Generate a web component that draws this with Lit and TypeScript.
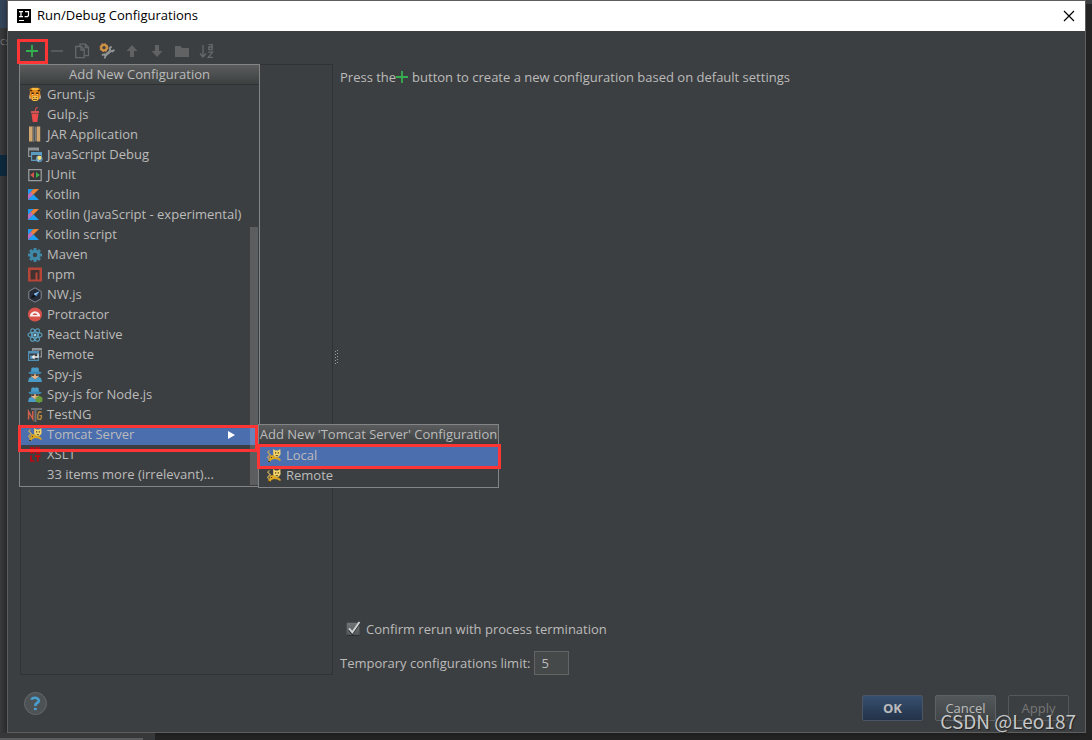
import { LitElement, html, svg, css, nothing, TemplateResult } from "lit";
import { customElement, property, state } from "lit/decorators.js";

const star = (n: number, r: number, w: number) =>
  Array.from({ length: n }, (_, i) => svg`<rect x=${8 - w / 2} y=${8 - r} width=${w} height="4" transform="rotate(${(i * 360) / n} 8 8)"/>`);

const tomcat = svg`
  <path d="M3.400 12 1.600 9.400 3.800 7M3.500 2.400 1.800 4.200 4.600 7" fill="none" stroke="#c2a35c" stroke-width="1.200"/>
  <path d="M4 7.600 7.500 7 9 8.600 13 9.800 15 12 14 13 11.500 11.500 8 11 5.500 12 4 14H1.600L3.200 11.500Z" fill="#d9a520"/>
  <path d="M7.200 1 9.400 2.400H12L14.300 1 14.600 6.200 12.800 8.800H9L7.200 6.400Z" fill="#f4d36a"/>
  <path d="M9 4.200h1.200v1.300H9zM11.700 4.200h1.200v1.300h-1.200zM9.700 7h2.400v.8H9.700zM5 9h1v1H5zM2 13h2v1H2z" fill="#4b3a12"/>`;

const kotlin = svg`
  <path d="M1 2H6.6L1 8Z" fill="#1c9af2"/>
  <path d="M6.6 2H12L1 13V8Z" fill="#e8813a"/>
  <path d="M1 8 4 4.8 6 8 1 13Z" fill="#b96cc0"/>
  <path d="M1 13 6.5 7.5 12 13Z" fill="#1ea0f5"/>`;

const spy = svg`
  <path d="M4.4 1 6.5.2 8 1 9.5.2 11.6 1 12 5H4Z" fill="#4a9cc6"/>
  <path d="M1 5.4 4 4.4h8l3 1-2 1.6H3Z" fill="#3c88b4"/>
  <path d="M4 7h8l-.6 3L8 12.4 4.6 10Z" fill="#e6b184"/>
  <path d="M4 7.2h3.400L7 8.8H4.6ZM8.600 7.200H12l-.6 1.600H9Z" fill="#23292d"/>
  <path d="M1 15 2 11 4.6 9.8 8 12.6 11.4 9.8 14 11l1 4Z" fill="#4a9cc6"/>`;

const icons: Record<string, TemplateResult> = {
  grunt: svg`
    <path d="M2.5 2 5 .8h6L13.500 2 13 5 13.600 9 11 13.500H5L2.400 9 3 5Z" fill="#e48a1e"/>
    <path d="M5 1h6v2H5z" fill="#f6b93c"/>
    <path d="M3 2.500 5.600 3.600 5 4.400 3 4ZM13 2.500 10.400 3.600 11 4.400 13 4ZM4.500 5.500h2.300v1.700H4.500zM9.200 5.500h2.300v1.700H9.200z" fill="#3c2408"/>
    <path d="M5 7.300h1.400v.8H5zM9.600 7.300H11v.8H9.600zM2.200 8l1.600 3.600L2.600 12ZM13.800 8l-1.600 3.600 1.200.4Z" fill="#f5ecd7"/>
    <path d="M5.500 9h5l.5 3.500-1.500 1.500h-3L5 12.500Z" fill="#f6c24a"/>
    <path d="M6.200 10h1v1h-1zM8.800 10h1v1h-1zM6 12.200h4v.8H6z" fill="#5a3508"/>`,
  gulp: svg`
    <path d="M8 4.500 9 1.200 10.800.4" fill="none" stroke="#d8484a" stroke-width="1.100"/>
    <path d="M4 4.200h8v1.600H4z" fill="#f05a5b"/><path d="M4.500 6.400h7L10.300 15H5.700Z" fill="#eb4a4b"/>`,
  jar: svg`
    <path d="M2-.6h3.600v15H2zM9.600-.6h3.600v15H9.600z" fill="#cfa670"/>
    <path d="M6.800-.6v15M8.600.4v14" stroke="#b8babb" stroke-width="1.200" stroke-dasharray="1 1"/>`,
  jsdebug: svg`
    <path d="M1 .5h11v3H1z" fill="#8f9193"/><path d="M1.600 3v6.400H4M11.400 3v1" fill="none" stroke="#8f9193" stroke-width="1.200"/>
    <path d="M4.600 5.600h9.800v7.800H4.600z" fill="#3c3f41" stroke="#5b9bc2" stroke-width="1.200"/><path d="M4 5h11v3H4z" fill="#5b9bc2"/>
    <circle cx="12.200" cy="11.800" r="3.400" fill="#5c8fb3"/><circle cx="12.400" cy="10.800" r="2.100" fill="#f7e07a"/><path d="M9.500 12.500 12 13v2Z" fill="#a9c9dd"/>`,
  junit: svg`
    <path d="M1.800 2.600h12.400v11H1.800z" fill="#35383a" stroke="#9a9c9d" stroke-width="1.300"/>
    <path d="M7 5v6L3.200 8Z" fill="#d4564b"/><path d="M9 5v6l3.800-3Z" fill="#3fae49"/>`,
  kotlin,
  maven: svg`<g fill="#3f89a8">${star(8, 7, 3)}<circle cx="8" cy="8" r="5.200"/></g><circle cx="8" cy="8" r="2.200" fill="#3c3f41"/>`,
  npm: svg`<path d="M1 .5h14v14H1z" fill="#b64638"/><path d="M3.500 3h9v9.500H10.500V5.500H8.500v7H3.500z" fill="#42322f"/>`,
  nw: svg`
    <path d="M8 .8 14.200 4.400v7.200L8 15.200 1.800 11.600V4.400Z" fill="#252c38" stroke="#858a90"/>
    <path d="M12.600 4.200 9.200 9.400 6.800 7Z" fill="#4a90d9"/><path d="M3.400 11.800 6.800 7l2.400 2.400Z" fill="#0f1319"/><path d="M12.600 4.200 6.800 7l1.200 1.200Z" fill="#9cc7ee"/>`,
  protractor: svg`<circle cx="8" cy="7.500" r="7" fill="#d9534a"/>
    <path d="M2.800 9.500a5.200 5.200 0 0 1 10.400 0Z" fill="#f7f0ef"/><path d="M5.600 8a2.500 2.300 0 0 1 4.800 0Z" fill="#d9534a"/>`,
  react: svg`<g fill="none" stroke="#5ba3c4" stroke-width="1.100">
    <ellipse cx="8" cy="8" rx="7" ry="2.700"/><ellipse cx="8" cy="8" rx="7" ry="2.700" transform="rotate(60 8 8)"/><ellipse cx="8" cy="8" rx="7" ry="2.700" transform="rotate(120 8 8)"/></g>
    <circle cx="8" cy="8" r="1.500" fill="#8fd0ea"/>`,
  remote: svg`
    <path d="M5 1h10v2.500H5zM13.800 3v6.200H12.500v1.200H15V3z" fill="#8f9193"/><path d="M5 1h1.200v3H5z" fill="#8f9193"/>
    <path d="M1.600 4.600h9.800v8.800H1.600z" fill="#3c3f41" stroke="#4f8fb8" stroke-width="1.200"/><path d="M1 4h11v2.500H1z" fill="#4f8fb8"/><path d="M3 8.500h3v3.500H3z" fill="#4f8fb8"/>
    <path d="M11 6.500V10H6.500" fill="none" stroke="#eceded" stroke-width="1.300"/><path d="M7.600 7.400v5.200L4.400 10Z" fill="#eceded"/>`,
  spy,
  spynode: svg`${spy}<path d="M12 8.800l3.400 1.800v3.600L12 16l-3.400-1.800v-3.600Z" fill="#6a9a3a"/>`,
  testng: svg`<path d="M4 1h11v2H9.500v12H7.500V3H4z" fill="#6f7173"/>
    <path d="M1.600 12.500V4.500L5.800 12V4" fill="none" stroke="#d1624e" stroke-width="1.500"/>
    <path d="M14.600 5.200 12 4.800 10.800 8v4l2.600.4 1-1.600V8.600h-2" fill="none" stroke="#b5853d" stroke-width="1.400"/>`,
  tomcat,
  xslt: svg`<g fill="none" stroke="#c4070d" stroke-width="1.700"><path d="M3.500 0 7 6.500M7 0 3.500 6.500M13 1H9.200v2.500H12.500V6H8.800M4 8.500V14H7.500M8 9.200h5.500M10.800 9v5.500"/></g>`,
  add: svg`<path d="M2 8h12M8 2v12" stroke="#35b04e" stroke-width="1.800"/>`,
  remove: svg`<path d="M2 8h12" stroke="#636566" stroke-width="1.400"/>`,
  copy: svg`<g fill="#3c3f41" stroke="#66686a" stroke-width="1.300"><path d="M6 3.500V1.200h5.500l3 3v8.500H11"/><path d="M1.700 3.500h5.500l3 3v8.200H1.700z"/><path d="M7 4v3h3M11.200 1.500v3h3" fill="none"/></g>`,
  tools: svg`
    <g fill="none" stroke="#8f9394"><path d="M11.500 8 5.500 13" stroke-width="2.800"/>
    <path d="M12.600 3.600 10.800 5.200 11.200 7.600 13.400 8.400 15.400 6.800" stroke-width="2"/>
    <path d="M2.800 12.200 5.200 11.400 6.400 13 5.600 15.600" stroke-width="1.800"/></g>
    <g fill="none" stroke="#cf9146"><circle cx="5" cy="4.600" r="2.800" stroke-width="2.200"/><circle cx="5" cy="4.600" r="3.900" stroke-width="1.200" stroke-dasharray="1.700 1.360"/></g>`,
  up: svg`<path d="M8 2l5.500 6H10v6H6V8H2.500Z" fill="#606264"/>`,
  down: svg`<path d="M8 14l5.500-6H10V2H6v6H2.500Z" fill="#606264"/>`,
  folder: svg`<path d="M1 3h5.500L8 5h7v9H1z" fill="#606264"/>`,
  sort: svg`<g fill="none" stroke="#66686a" stroke-width="1.300"><path d="M4 2v11.500M1 10.500l3 3.500 3-3.500"/>
    <path d="M9.600 1.700h3.600v4.900H9.800V4H13M9.300 9.100h4.200l-4.200 5.200h4.500"/></g>`,
};

const icon = (name: string, narrow = false) =>
  html`<svg class="icon ${narrow ? "narrow" : ""}" viewBox=${narrow ? "0 0 14 16" : "0 0 16 16"} aria-hidden="true">${icons[name]}</svg>`;

const configurations: Array<[string, string]> = [
  ["grunt", "Grunt.js"],
  ["gulp", "Gulp.js"],
  ["jar", "JAR Application"],
  ["jsdebug", "JavaScript Debug"],
  ["junit", "JUnit"],
  ["kotlin", "Kotlin"],
  ["kotlin", "Kotlin (JavaScript - experimental)"],
  ["kotlin", "Kotlin script"],
  ["maven", "Maven"],
  ["npm", "npm"],
  ["nw", "NW.js"],
  ["protractor", "Protractor"],
  ["react", "React Native"],
  ["remote", "Remote"],
  ["spy", "Spy-js"],
  ["spynode", "Spy-js for Node.js"],
  ["testng", "TestNG"],
  ["tomcat", "Tomcat Server"],
  ["xslt", "XSLT"],
  ["", "33 items more (irrelevant)..."],
];

const shared = css`
  * { box-sizing: border-box; }
  button, input { font: inherit; color: inherit; margin: 0; }
  .icon { display: block; flex: none; width: 16px; height: 16px; overflow: visible; }
  .narrow { width: 14px; }
  .mark { position: absolute; border: 3px solid #fe3535; pointer-events: none; z-index: 3; }
`;

@customElement("config-menu")
class ConfigMenu extends LitElement {
  @property() heading = "";
  @property({ attribute: false }) items: Array<[string, string]> = [];
  @property() selected = "";
  @property({ type: Boolean }) scrollable = false;

  static styles = [shared, css`
    :host { display: block; width: 241px; background: #3c3f41; border: 1px solid #828485; padding-bottom: 1px; }
    .heading { margin: 0; height: 20px; line-height: 18px; font-size: inherit; font-weight: 400; text-align: center; white-space: nowrap;
      background: linear-gradient(#5a5c5d, #3d4041); border-bottom: 1px solid #2f3132; }
    .list { list-style: none; margin: 0; padding: 0; }
    .row { position: relative; }
    .item { display: flex; align-items: center; gap: 4px; width: 100%; height: 20px; padding: 0 0 0 7px; border: 0;
      background: none; text-align: left; white-space: nowrap; }
    .item.on { background: #4b6eaf; }
    .item.plain { padding-left: 27px; }
    .label { padding-bottom: 2px; }
    .arrow { width: 7px; height: 10px; margin-left: auto; margin-right: 24px; }
    .thumb { position: absolute; right: 1px; top: 162px; bottom: 1px; width: 8px; background: rgba(255, 255, 255, 0.16); z-index: 1; }
    .sub { position: absolute; left: 238px; top: -1px; z-index: 2; }
    .outer { left: -2px; top: 0; width: 240px; height: 27px; }
    .inner { left: -2px; right: -3px; top: -2px; height: 25px; }
    .list.nested { padding-top: 1px; }
  `];

  render() {
    return html`
      <h2 class="heading">${this.heading}</h2>
      <ul class="list ${this.scrollable ? "" : "nested"}">
        ${this.items.map(([glyph, label]) => {
          const on = label === this.selected;
          return html`<li class="row">
            <button class="item ${on ? "on" : ""} ${glyph ? "" : "plain"}">
              ${glyph ? icon(glyph, glyph === "kotlin") : nothing}<span class="label">${label}</span>
              ${on && this.scrollable ? html`<svg class="arrow" viewBox="0 0 7 10" aria-hidden="true"><path d="M0 1 7 5 0 9Z" fill="#fff"/></svg>` : nothing}
            </button>
            ${on && this.scrollable
              ? html`<config-menu class="sub" heading="Add New 'Tomcat Server' Configuration" selected="Local"
                  .items=${[["tomcat", "Local"], ["tomcat", "Remote"]]}></config-menu>
                  <span class="mark outer"></span>`
              : nothing}
            ${on && !this.scrollable ? html`<span class="mark inner"></span>` : nothing}
          </li>`;
        })}
      </ul>
      ${this.scrollable ? html`<span class="thumb"></span>` : nothing}`;
  }
}

@customElement("app-root")
class AppRoot extends LitElement {
  @state() private confirm = true;

  static styles = [shared, css`
    :host { display: flex; flex-direction: column; min-height: 100vh; position: relative; overflow: hidden; box-sizing: border-box;
      background: #242424; color: #bbbbbb; font: 13px/18px "Open Sans", "Noto Sans", sans-serif; }
    .stage { flex: 1; display: flex; }
    .left { width: 7px; flex: none; background: linear-gradient(90deg, #393b3d, #303234); font-size: 11px; color: #777; overflow: hidden;
      display: flex; flex-direction: column; }
    .tab { height: 28px; background: #35455a; }
    .crumb { height: 127px; padding-top: 4px; }
    .line { height: 21px; background: #0d293e; }
    .right { width: 6px; flex: none; border-top: 4px solid #3c3f41; background: #242424; }
    .bottom { height: 7px; display: flex; align-items: flex-end; }
    .pane { width: 155px; height: 7px; background: #36383a; padding-top: 5px; }
    .bar { display: block; width: 143px; height: 2px; background: #5a5c5d; }
    .dialog { flex: 1; display: flex; flex-direction: column; border: 1px solid #5e5e5e; background: #3c3f41; box-shadow: 0 0 6px #1118; }
    .title { display: flex; align-items: center; height: 30px; background: #fff; color: #000; padding: 0 8px 0 9px; }
    .title h1 { margin: 0 auto 0 6px; padding-bottom: 2px; font-size: 13px; font-weight: 400; }
    .logo { width: 14px; height: 14px; }
    .close { display: grid; place-items: center; width: 16px; height: 16px; padding: 0; border: 0; background: none; }
    .body { flex: 1; display: flex; flex-direction: column; padding: 8px 16px 11px 12px; }
    .toolbar { display: flex; gap: 1px; height: 25px; position: relative; }
    .tool { width: 24px; height: 24px; padding: 4px; border: 0; background: none; }
    .add { position: relative; }
    .plus-mark { left: -3px; top: 0; width: 31px; height: 25px; }
    .menu { position: absolute; left: -1px; top: 25px; z-index: 2; }
    .split { flex: 1; display: flex; }
    .tree { width: 313px; border: 1px solid #303233; }
    .grip { width: 7px; display: grid; place-items: center; padding-bottom: 25px; }
    .details { flex: 1; display: flex; flex-direction: column; }
    .hint { margin: 0 0 auto; padding-top: 4px; display: flex; align-items: center; }
    .hint .icon { margin: 0 2px 0 -2px; }
    .confirm { display: flex; align-items: center; gap: 6px; margin: 0 0 13px 6px; }
    .check { display: grid; width: 14px; height: 14px; }
    .check > * { grid-area: 1 / 1; }
    .check input { appearance: none; width: 14px; height: 14px; background: linear-gradient(#717475, #55585a); border: 1px solid #4a4d4f; border-bottom-color: #2b2d2e; border-radius: 2px; }
    .tick { width: 16px; height: 16px; overflow: visible; pointer-events: none; }
    .limit { display: flex; align-items: center; gap: 4px; }
    .limit input { width: 35px; height: 24px; padding: 0 6px; background: #45494a; border: 1px solid #646464; outline: 0; }
    .footer { display: flex; align-items: flex-end; gap: 12px; min-height: 46px; padding: 17px 0 0 4px; }
    .help { align-self: flex-start; width: 23px; height: 23px; margin-right: auto; padding: 0; border: 1px solid #65696b; border-radius: 50%; background: #4d5254; }
    .help svg { display: block; width: 21px; height: 21px; }
    .btn { width: 61px; height: 26px; padding: 0; border: 1px solid #5d6163; border-radius: 2px; background: linear-gradient(#525759, #414547); }
    .ok { background: linear-gradient(#37506f, #233249); font-weight: 700; border-color: #4c5563; }
    .off { background: none; color: #777; border-color: #54585a; }
    .watermark { position: absolute; right: 16px; bottom: 5px; font: 19px/28px "Noto Sans CJK SC", sans-serif; color: #c6c8c9; text-shadow: 1px 1px 1px #222; pointer-events: none; }
  `];

  render() {
    return html`
      <div class="stage">
        <div class="left"><span class="tab"></span><span class="crumb">cs</span><span class="line"></span></div>
        <main class="dialog">
          <header class="title">
            <svg class="logo" viewBox="0 0 14 14" aria-hidden="true"><path d="M0 0h14v14H0z"/>
              <path d="M2 2.600h4M4 2.600v5M2 7.600h4M8 2.600h3.500V6.500L10.600 7.600H7.600M2 11.500h5" fill="none" stroke="#fff" stroke-width="1.200"/></svg>
            <h1>Run/Debug Configurations</h1>
            <button class="close" aria-label="Close"><svg width="12" height="12" viewBox="0 0 12 12"><path d="M1 1l10 10M11 1 1 11" stroke="#000" stroke-width="1.200"/></svg></button>
          </header>
          <div class="body">
            <div class="toolbar">
              <div class="add">
                <button class="tool" aria-label="Add">${icon("add")}</button>
                <span class="mark plus-mark"></span>
                <config-menu class="menu" scrollable heading="Add New Configuration" selected="Tomcat Server" .items=${configurations}></config-menu>
              </div>
              ${["remove", "copy", "tools", "up", "down", "folder", "sort"].map((n) => html`<button class="tool" aria-label=${n}>${icon(n)}</button>`)}
            </div>
            <div class="split">
              <div class="tree"></div>
              <div class="grip"><svg width="4" height="15" viewBox="0 0 4 15" aria-hidden="true">
                <path d="M.500 1v14" stroke="#9a9c9d" stroke-dasharray="1 2"/><path d="M2.500 0v14" stroke="#9a9c9d" stroke-dasharray="1 2"/></svg></div>
              <section class="details">
                <p class="hint">Press the${icon("add")}button to create a new configuration based on default settings</p>
                <label class="confirm">
                  <span class="check">
                    <input type="checkbox" .checked=${this.confirm} @change=${(e: Event) => (this.confirm = (e.target as HTMLInputElement).checked)}>
                    ${this.confirm ? html`<svg class="tick" viewBox="0 0 16 16" aria-hidden="true"><path d="M3 7.500 6.300 11.500 13.500 1" fill="none" stroke="#222" stroke-width="2"/><path d="M3 6.300 6.300 10.300 13.500 0" fill="none" stroke="#d0d2d3" stroke-width="2"/></svg>` : nothing}
                  </span>
                  Confirm rerun with process termination
                </label>
                <label class="limit">Temporary configurations limit:<input type="text" value="5"></label>
              </section>
            </div>
            <footer class="footer">
              <button class="help" aria-label="Help"><svg viewBox="0 0 21 21"><path d="M6.500 6.800Q7 4.800 10 4.800T13.800 7.500Q13.800 9 12 10T10.300 13" fill="none" stroke="#4a9fd0" stroke-width="2.600"/><path d="M9 14.800h2.700v2.400H9z" fill="#4a9fd0"/></svg></button>
              <button class="btn ok">OK</button>
              <button class="btn">Cancel</button>
              <button class="btn off" disabled>Apply</button>
            </footer>
          </div>
        </main>
        <div class="right"></div>
      </div>
      <div class="bottom"><span class="pane"><span class="bar"></span></span></div>
      <div class="watermark">CSDN @Leo187</div>`;
  }
}
